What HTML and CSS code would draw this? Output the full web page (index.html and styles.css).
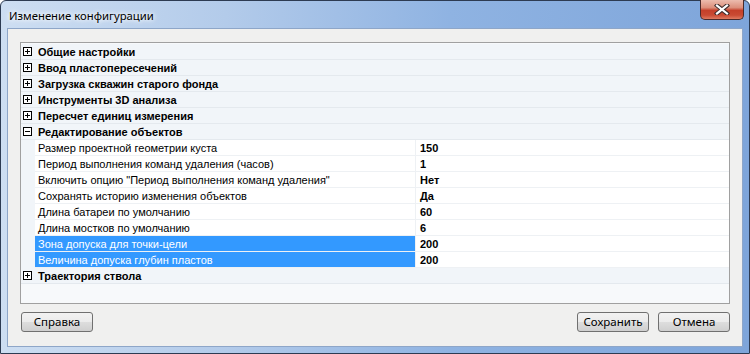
FILE: index.html
```html
<!DOCTYPE html>
<html lang="ru">
<head>
    <meta charset="UTF-8">
    <title>Изменение конфигурации</title>
    <link rel="stylesheet" href="styles.css">
</head>
<body>
    <div class="window">
        <div class="titlebar">
            <span class="title">Изменение конфигурации</span>
            <div class="close">
                <svg width="18" height="11" viewBox="0 0 18 11">
                    <path d="M4 1.5 L14 9.5 M14 1.5 L4 9.5" stroke="#3b2b2b" stroke-width="4.2" stroke-linecap="square"/>
                    <path d="M4 1.5 L14 9.5 M14 1.5 L4 9.5" stroke="#ffffff" stroke-width="2.2" stroke-linecap="square"/>
                </svg>
            </div>
        </div>

        <div class="client">
            <div class="grid">
                <div class="cat"><span class="tog plus"></span>Общие настройки</div>
                <div class="cat"><span class="tog plus"></span>Ввод пластопересечений</div>
                <div class="cat"><span class="tog plus"></span>Загрузка скважин старого фонда</div>
                <div class="cat"><span class="tog plus"></span>Инструменты 3D анализа</div>
                <div class="cat"><span class="tog plus"></span>Пересчет единиц измерения</div>
                <div class="cat"><span class="tog minus"></span>Редактирование объектов</div>
                <div class="prop"><div class="name">Размер проектной геометрии куста</div><div class="value">150</div></div>
                <div class="prop"><div class="name">Период выполнения команд удаления (часов)</div><div class="value">1</div></div>
                <div class="prop"><div class="name">Включить опцию "Период выполнения команд удаления"</div><div class="value">Нет</div></div>
                <div class="prop"><div class="name">Сохранять историю изменения объектов</div><div class="value">Да</div></div>
                <div class="prop"><div class="name">Длина батареи по умолчанию</div><div class="value">60</div></div>
                <div class="prop"><div class="name">Длина мостков по умолчанию</div><div class="value">6</div></div>
                <div class="prop sel"><div class="name">Зона допуска для точки-цели</div><div class="value">200</div></div>
                <div class="prop sel"><div class="name">Величина допуска глубин пластов</div><div class="value">200</div></div>
                <div class="cat"><span class="tog plus"></span>Траектория ствола</div>
            </div>

            <div class="buttons">
                <button class="btn">Справка</button>
                <div class="spacer"></div>
                <button class="btn">Сохранить</button>
                <button class="btn">Отмена</button>
            </div>
        </div>
    </div>
</body>
</html>
```

FILE: styles.css
```css
body {
    margin: 0;
    background-color: #ffffff;
    font-family: "Liberation Sans", Arial, sans-serif;
}

.window {
    width: 750px;
    height: 354px;
    box-sizing: border-box;
    border: 1px solid #2d3b52;
    border-radius: 6px 6px 0 0;
    background: linear-gradient(90deg, #cddef2 0%, #b3cbea 30%, #8fb3e2 60%, #7ea5da 100%);
    display: flex;
    flex-direction: column;
    position: relative;
}

.titlebar {
    height: 27px;
    display: flex;
    align-items: center;
    padding-left: 8px;
}

.title {
    font-family: "Noto Sans", sans-serif;
    font-size: 11.3px;
    color: #000000;
    text-shadow: 0 0 6px #ffffff, 0 0 4px #ffffff;
    margin-top: 1px;
}

.close {
    position: absolute;
    top: -1px;
    right: 5px;
    width: 44px;
    height: 20px;
    box-sizing: border-box;
    border: 1px solid #4a2a2a;
    border-top: none;
    border-radius: 0 0 5px 5px;
    background: linear-gradient(180deg, #ecbcae 0%, #dc8f7b 40%, #c5402a 55%, #c94a33 80%, #e07a60 100%);
    display: flex;
    align-items: center;
    justify-content: center;
}

.client {
    flex: 1;
    margin: 0 6px 6px 6px;
    border: 1px solid #8ea6c8;
    background-color: #f0f0ef;
    padding: 13px 12px 14px 12px;
    display: flex;
    flex-direction: column;
}

.grid {
    flex: 1;
    border: 1px solid #a0a0a0;
    background-color: #f7f9fb;
    padding-top: 1px;
    font-size: 11px;
    color: #000000;
}

.cat {
    height: 16px;
    box-sizing: border-box;
    border-bottom: 1px solid #e4e9ee;
    background-color: #f1f5f9;
    display: flex;
    align-items: center;
    font-weight: bold;
    padding-left: 2px;
}

.tog {
    width: 9px;
    height: 9px;
    box-sizing: border-box;
    border: 1px solid #000000;
    background-color: #ffffff;
    margin-right: 6px;
    position: relative;
}

.tog::before {
    content: "";
    position: absolute;
    left: 1px;
    top: 3px;
    width: 5px;
    height: 1px;
    background-color: #000000;
}

.tog.plus::after {
    content: "";
    position: absolute;
    left: 3px;
    top: 1px;
    width: 1px;
    height: 5px;
    background-color: #000000;
}

.prop {
    height: 16px;
    display: flex;
    padding-left: 14px;
    background-color: #f1f5f9;
}

.prop .name,
.prop .value {
    box-sizing: border-box;
    height: 16px;
    border-bottom: 1px solid #eef1f4;
    background-color: #ffffff;
    display: flex;
    align-items: center;
    white-space: nowrap;
}

.prop .name {
    width: 381px;
    padding-left: 3px;
    border-right: 1px solid #eef1f4;
}

.prop .value {
    flex: 1;
    padding-left: 4px;
    font-weight: bold;
}

.prop.sel .name {
    background-color: #3399ff;
    color: #ffffff;
}

.buttons {
    height: 20px;
    margin-top: 8px;
    display: flex;
    gap: 9px;
    padding: 0 0 0 1px;
}

.spacer {
    flex: 1;
}

.btn {
    width: 72px;
    height: 20px;
    box-sizing: border-box;
    border: 1px solid #707070;
    border-radius: 3px;
    background: linear-gradient(180deg, #f2f2f2 0%, #ebebeb 50%, #dddddd 51%, #cfcfcf 100%);
    font-family: "Noto Sans", sans-serif;
    font-size: 11.5px;
    color: #000000;
    padding: 0;
    line-height: 16px;
}
```
